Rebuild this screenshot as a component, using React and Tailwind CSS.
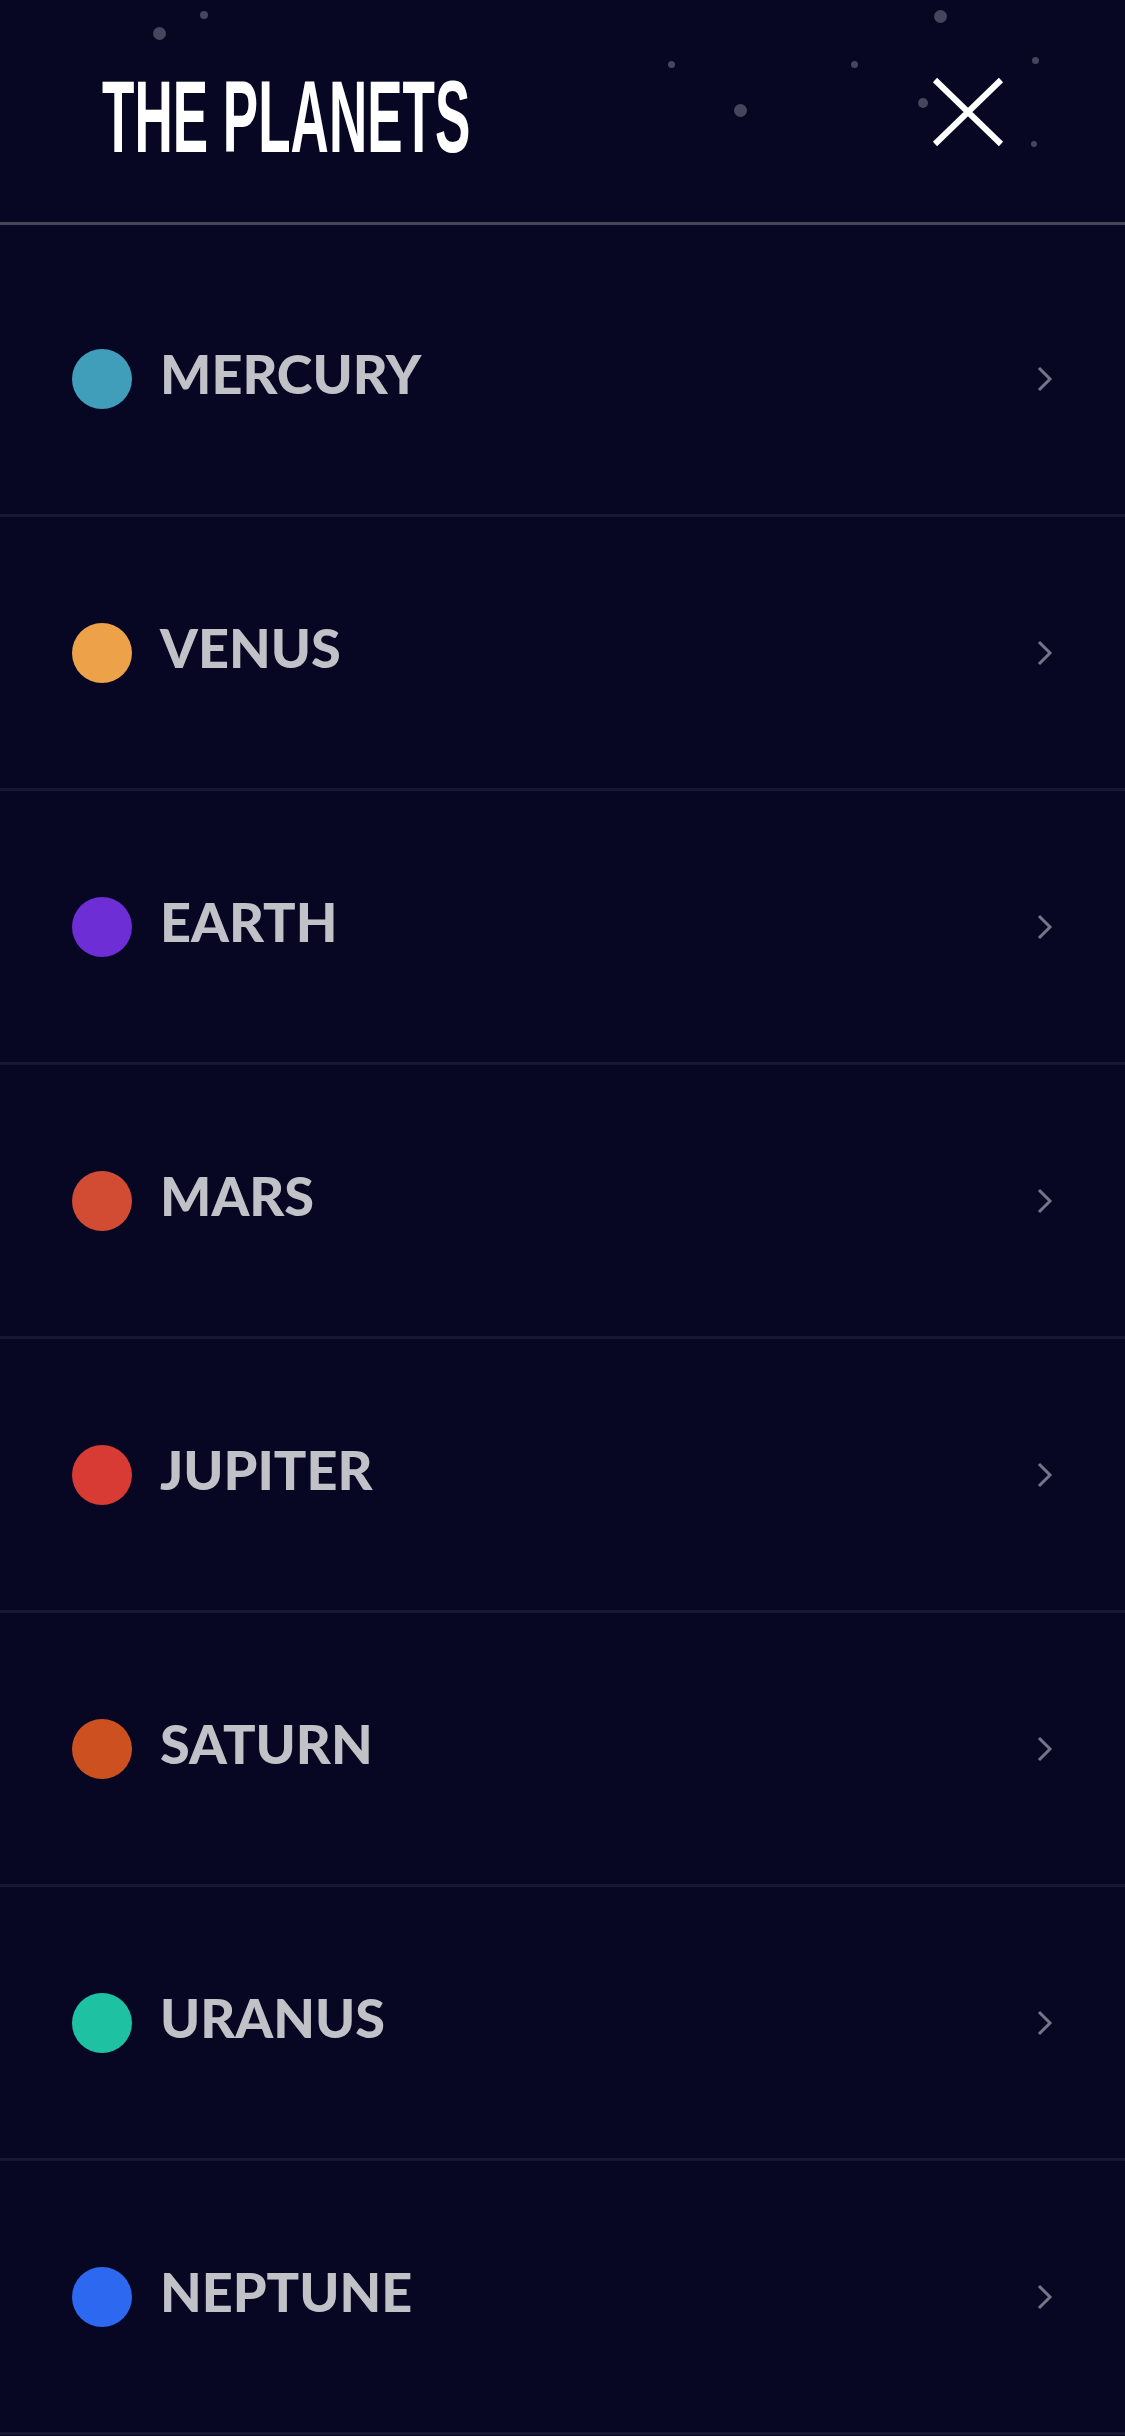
const planets = [
  { name: "MERCURY", color: "bg-[#419EBB]" },
  { name: "VENUS", color: "bg-[#EDA249]" },
  { name: "EARTH", color: "bg-[#6D2ED5]" },
  { name: "MARS", color: "bg-[#D14C32]" },
  { name: "JUPITER", color: "bg-[#D83A34]" },
  { name: "SATURN", color: "bg-[#CD5120]" },
  { name: "URANUS", color: "bg-[#1EC1A2]" },
  { name: "NEPTUNE", color: "bg-[#2D68F0]" },
]

// decorative stars in the header
const stars = [
  { x: 159, y: 33, s: 13 },
  { x: 204, y: 15, s: 8 },
  { x: 940, y: 16, s: 13 },
  { x: 671, y: 64, s: 7 },
  { x: 854, y: 64, s: 7 },
  { x: 1035, y: 60, s: 7 },
  { x: 740, y: 110, s: 13 },
  { x: 923, y: 103, s: 10 },
  { x: 1034, y: 144, s: 6 },
]

const Chevron = () => (
  <svg width="16" height="26" viewBox="0 0 16 26" fill="none">
    <path d="M2 2l11 11-11 11" stroke="#75758a" strokeWidth="3" />
  </svg>
)

const App = () => {
  return (
    <div className="min-h-screen w-[1125px] bg-[#070724] font-['Lato',sans-serif]">
      <header className="relative h-[225px] border-b-[3px] border-[#46465b] flex items-start justify-between pl-[102px] pr-[121px] overflow-hidden">
        {stars.map((st, i) => (
          <span
            key={i}
            className="absolute rounded-full bg-[#45455b]"
            style={{ left: st.x - st.s / 2, top: st.y - st.s / 2, width: st.s, height: st.s }}
          />
        ))}
        <h1 className="mt-[66px] inline-block origin-left scale-x-[0.52] text-[102px] leading-none font-bold text-white font-['Liberation_Sans',Arial,sans-serif] whitespace-nowrap">
          THE PLANETS
        </h1>
        <button className="relative mt-[77px]">
          <svg width="72" height="70" viewBox="0 0 72 70" fill="none">
            <path d="M3 3L69 67M69 3L3 67" stroke="white" strokeWidth="6" />
          </svg>
        </button>
      </header>

      <ul className="pt-[18px]">
        {planets.map((p) => (
          <li
            key={p.name}
            className="h-[274px] border-b-[3px] border-[#181833] flex items-center pl-[72px] pr-[72px]"
          >
            <span className={`w-[60px] h-[60px] rounded-full ${p.color}`}></span>
            <span className="ml-[28px] mb-[9px] text-[54px] leading-none font-black text-[#C1C1C8]">
              {p.name}
            </span>
            <span className="ml-auto">
              <Chevron />
            </span>
          </li>
        ))}
      </ul>
    </div>
  )
}

export default App
